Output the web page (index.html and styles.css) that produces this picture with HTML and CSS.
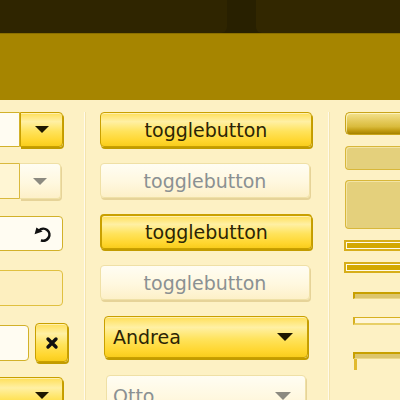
FILE: index.html
```html
<!DOCTYPE html>
<html>
<head>
<meta charset="utf-8">
<link rel="stylesheet" href="styles.css">
</head>
<body>
<div class="top">
  <div class="tab tab-left"></div>
  <div class="tab tab-right"></div>
</div>
<div class="bar"></div>
<div class="content">
  <div class="col col1">
    <div class="row r1">
      <div class="entry white e-combo"></div>
      <div class="cbtn yellow"><span class="arrow dark"></span></div>
    </div>
    <div class="row r2">
      <div class="entry dis e-combo"></div>
      <div class="cbtn pale"><span class="arrow grey"></span></div>
    </div>
    <div class="row r3 entry white e-icon">
      <svg width="20" height="20" viewBox="0 0 20 20">
        <path d="M8 16.2 A6 6 0 1 0 6.2 6.4" fill="none" stroke="#111" stroke-width="2.6"/>
        <polygon points="1.6,10.2 3.4,3.6 9.6,7.6" fill="#111"/>
      </svg>
    </div>
    <div class="row r4 entry e-empty"></div>
    <div class="row r5">
      <div class="entry white e-small"></div>
      <div class="xbtn yellow">
        <svg width="14" height="14" viewBox="0 0 14 14">
          <path d="M3 3 L11 11 M11 3 L3 11" stroke="#111" stroke-width="3.4" stroke-linecap="round"/>
        </svg>
      </div>
    </div>
    <div class="row r6 yellow combo6"><span class="arrow dark"></span></div>
  </div>
  <div class="sep"></div>
  <div class="col col2">
    <div class="toggle yellow">togglebutton</div>
    <div class="toggle pale disabled">togglebutton</div>
    <div class="toggle yellow pressed">togglebutton</div>
    <div class="toggle pale disabled">togglebutton</div>
    <div class="combo yellow andrea"><span class="label">Andrea</span><span class="arrow dark big"></span></div>
    <div class="combo pale otto"><span class="label">Otto</span><span class="arrow grey big"></span></div>
  </div>
  <div class="sep"></div>
  <div class="col col3">
    <div class="knob"></div>
    <div class="box b1"></div>
    <div class="box b2"></div>
    <div class="progress"><div class="fill"></div></div>
    <div class="progress p2"><div class="fill"></div></div>
    <div class="trough t1"></div>
    <div class="trough t2"></div>
    <div class="trough t3"></div>
    <div class="tick"></div>
  </div>
</div>
</body>
</html>
```
FILE: styles.css
```css
html, body {
  margin: 0;
  padding: 0;
  width: 400px;
  height: 400px;
  overflow: hidden;
  background: #fdf1c4;
  font-family: "DejaVu Sans", sans-serif;
}

.top {
  display: flex;
  height: 33px;
  background: #282000;
  border-bottom: 1px solid #8a6f00;
}
.tab-left {
  width: 227px;
  background: #2f2500;
  border-radius: 0 0 6px 0;
}
.tab-right {
  flex: 1;
  margin-left: 29px;
  background: #322700;
  border-radius: 0 0 0 6px;
}

.bar {
  height: 66px;
  background: #a68500;
}

.content {
  display: flex;
  align-items: flex-start;
  height: 300px;
  overflow: hidden;
  background: #fdf1c4;
}

.col {
  flex-shrink: 0;
  padding-top: 12px;
  box-sizing: border-box;
  display: flex;
  flex-direction: column;
}

.sep {
  flex-shrink: 0;
  margin-top: 12px;
  height: 288px;
  width: 1px;
  background: #fffaea;
  border-right: 1px solid #f4e4ad;
  margin-left: 16px;
}

/* shared surfaces */
.yellow {
  background: linear-gradient(to bottom, #ffdf58 0%, #fff0a4 26%, #ffe35c 55%, #ffd62e 85%, #f8cd1c 100%);
  border: 1px solid #c9a000;
  box-shadow: inset 0 1px 0 rgba(255, 255, 255, 0.5), 1px 2px 0 #c29c00;
  box-sizing: border-box;
}
.pale {
  background: linear-gradient(to bottom, #fffdf3 0%, #fff8df 55%, #fdf0c8 100%);
  border: 1px solid #efe0a6;
  box-shadow: 1px 2px 0 #e6d398;
  box-sizing: border-box;
}

.arrow {
  width: 0;
  height: 0;
  border-left: 7px solid transparent;
  border-right: 7px solid transparent;
  border-top: 7px solid #1a1500;
}
.arrow.grey { border-top-color: #8c8a80; }
.arrow.big {
  border-left-width: 8px;
  border-right-width: 8px;
  border-top-width: 8px;
}
.arrow.dark { border-top-color: #1e1800; }

/* column 1 */
.col1 {
  width: 74px;
  margin-left: -6px;
}
.row {
  display: flex;
  align-items: center;
  box-sizing: border-box;
}
.entry {
  box-sizing: border-box;
  border: 1px solid #d2b12a;
}
.white { background: #fffcf2; }
.dis { background: #fff6d4; border-color: #d9b93e; }

.r1 { height: 35px; margin-bottom: 16px; }
.r2 { height: 36px; margin-bottom: 17px; }
.r1 .e-combo, .r2 .e-combo {
  width: 26px;
  height: 100%;
  border-radius: 3px 0 0 3px;
}
.cbtn {
  height: 100%;
  display: flex;
  align-items: center;
  justify-content: center;
  border-radius: 0 4px 4px 0;
}
.r1 .cbtn { width: 43px; }
.r2 .cbtn { width: 41px; border-left: none; }

.e-icon {
  width: 69px;
  height: 35px;
  margin-bottom: 19px;
  border-radius: 4px;
  justify-content: flex-end;
  padding-right: 9px;
}
.e-empty {
  width: 69px;
  height: 36px;
  margin-bottom: 17px;
  border-radius: 4px;
  border-color: #e0c040;
  background: #fdefbf;
}
.r5 {
  height: 39px;
  margin-bottom: 15px;
  gap: 6px;
}
.e-small {
  width: 35px;
  height: 36px;
  border-radius: 4px;
}
.xbtn {
  width: 33px;
  height: 39px;
  border-radius: 4px;
  display: flex;
  align-items: center;
  justify-content: center;
}
.combo6 {
  width: 69px;
  height: 40px;
  border-radius: 4px;
  justify-content: flex-end;
  padding-right: 13px;
  padding-top: 14px;
  align-items: flex-start;
}

/* column 2 */
.col2 {
  width: 212px;
  margin-left: 14px;
}
.toggle {
  height: 35px;
  margin-bottom: 16px;
  border-radius: 4px;
  display: flex;
  align-items: center;
  justify-content: center;
  font-size: 19px;
  color: #2b2405;
}
.toggle.pressed {
  border-width: 2px 1px 1px 2px;
}
.toggle.disabled {
  color: #8a9092;
  width: 210px;
}
.combo {
  display: flex;
  align-items: center;
  justify-content: space-between;
  border-radius: 4px;
  font-size: 19px;
}
.andrea {
  height: 42px;
  margin: 0 4px 17px 4px;
  padding: 0 14px 0 8px;
  color: #2b2405;
}
.otto {
  height: 42px;
  margin: 0 6px;
  padding: 0 14px 0 6px;
  color: #8a9092;
}

/* column 3 */
.col3 {
  width: 100px;
  margin-left: 15px;
}
.knob {
  height: 23px;
  margin-bottom: 11px;
  border: 1px solid #c9a41a;
  border-right: none;
  border-radius: 5px 0 0 5px;
  background: linear-gradient(to bottom, #f4e28e 0%, #e8cf66 30%, #d9bb3c 65%, #c09a10 85%, #a58200 100%);
  box-sizing: border-box;
  box-shadow: inset 1px 1px 0 rgba(255, 250, 210, 0.7);
}
.box {
  box-sizing: border-box;
  background: #e4d07c;
  border: 1px solid #d8b73a;
  border-right: none;
  border-radius: 4px 0 0 4px;
  box-shadow: inset 1px 1px 0 #f3e4a4;
}
.b1 { height: 24px; margin-bottom: 10px; }
.b2 { height: 49px; margin-bottom: 11px; }
.progress {
  height: 11px;
  box-sizing: border-box;
  margin-left: -1px;
  border: 2px solid #d7ae1a;
  border-right: none;
  background: #fffbea;
  padding: 1px 0 1px 1px;
  margin-bottom: 11px;
}
.progress.p2 { margin-bottom: 19px; }
.progress .fill {
  height: 100%;
  background: #d3a800;
}
.trough {
  margin-left: 8px;
  box-sizing: border-box;
  border-top: 2px solid #c8a000;
  border-left: 2px solid #c8a000;
  border-bottom: 1px solid #ecd88a;
  background: #dcc56c;
}
.t1 { height: 7px; margin-bottom: 18px; }
.t2 {
  height: 8px;
  margin-bottom: 27px;
  background: #fff6d8;
  border-top: 1px solid #d7b020;
  border-left: 2px solid #d7b020;
  border-bottom: 2px solid #e8cf66;
}
.t3 { height: 7px; }
.tick {
  margin-left: 9px;
  width: 3px;
  height: 11px;
  background: #e1ba2e;
}
```
